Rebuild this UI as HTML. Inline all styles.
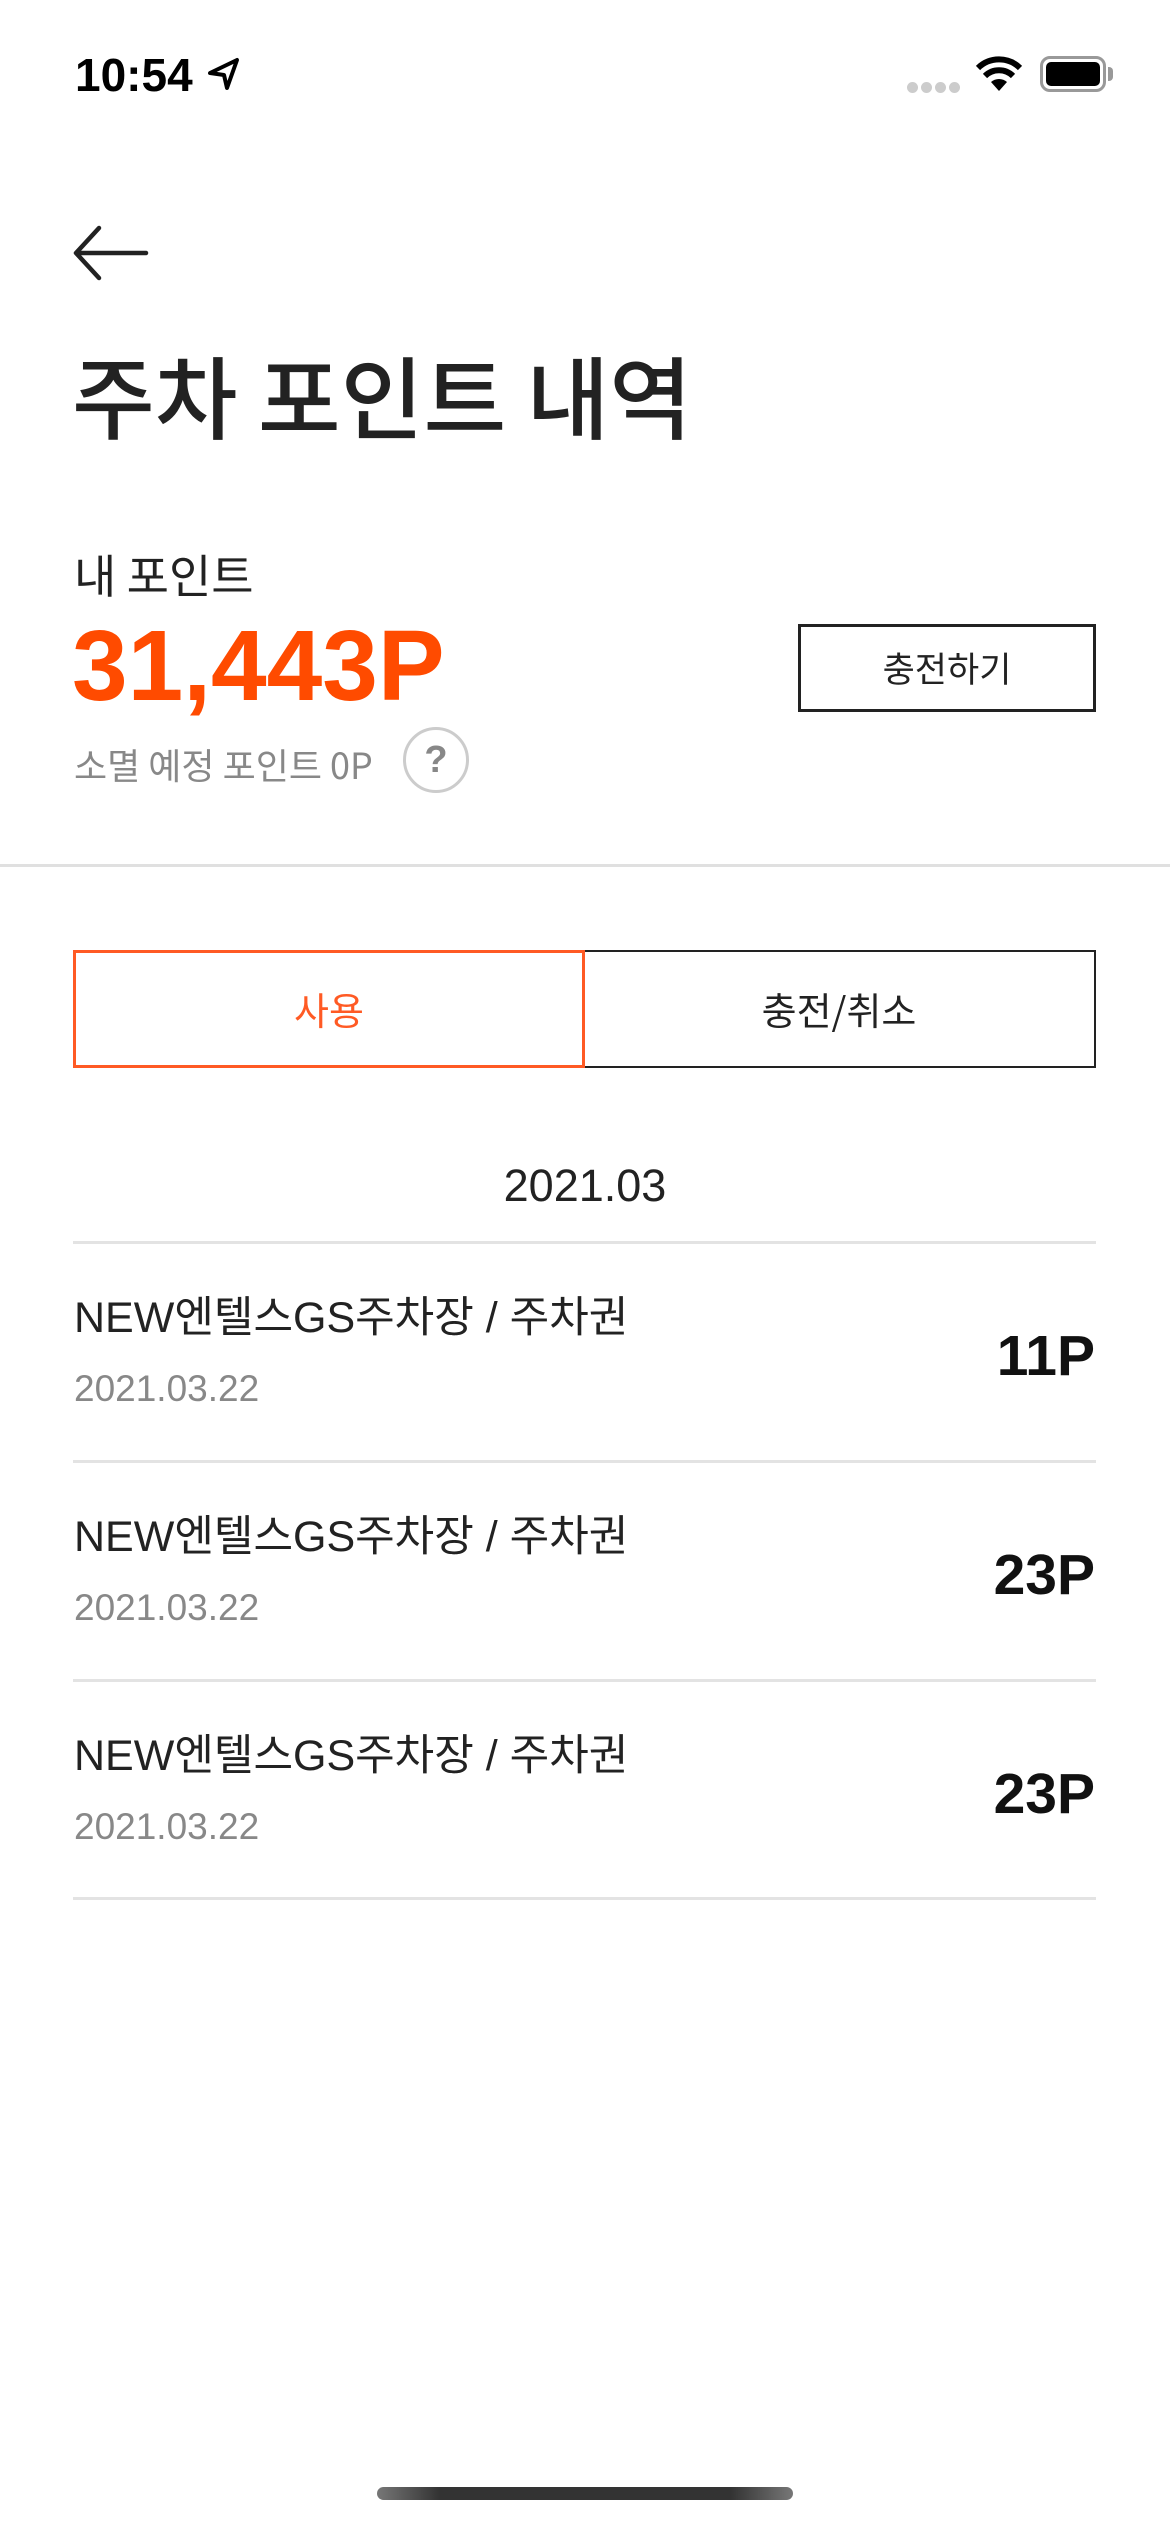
<!DOCTYPE html>
<html><head><meta charset="utf-8"><style>
*{margin:0;padding:0;box-sizing:border-box}
body{width:1170px;height:2532px;background:#fff;position:relative;overflow:hidden;font-family:"Liberation Sans","Noto Sans CJK KR",sans-serif;color:#222}
.a{position:absolute;white-space:nowrap}
.line{position:absolute;left:73px;width:1023px;height:3px;background:#e3e3e3}
.t{font-size:43px;color:#222;left:74px;line-height:1}
.d{font-size:37px;color:#888;left:74px;line-height:1}
.p{font-size:57px;font-weight:bold;color:#111;right:75px;line-height:1}
</style></head><body>
<div class="a" style="left:75px;top:52px;font-size:46px;font-weight:bold;line-height:46px;color:#000">10:54</div>
<svg class="a" style="left:206px;top:56px" width="36" height="36" viewBox="0 0 36 36"><path d="M4 17 L31 4 L21 32 L18 19 Z" fill="none" stroke="#000" stroke-width="4" stroke-linejoin="round"/></svg>
<div class="a" style="left:907px;top:82px;width:11px;height:11px;border-radius:50%;background:#ccc"></div>
<div class="a" style="left:921px;top:82px;width:11px;height:11px;border-radius:50%;background:#ccc"></div>
<div class="a" style="left:935px;top:82px;width:11px;height:11px;border-radius:50%;background:#ccc"></div>
<div class="a" style="left:949px;top:82px;width:11px;height:11px;border-radius:50%;background:#ccc"></div>
<svg class="a" style="left:974px;top:54px" width="50" height="38" viewBox="0 0 50 38"><path d="M25 37 L17 28 A12 12 0 0 1 33 28 Z" fill="#000"/><path d="M11 22 A20 20 0 0 1 39 22" fill="none" stroke="#000" stroke-width="6"/><path d="M4 14 A30 30 0 0 1 46 14" fill="none" stroke="#000" stroke-width="6"/></svg>
<div class="a" style="left:1040px;top:56px;width:66px;height:36px;border:3px solid #999;border-radius:10px;padding:3px"><div style="width:100%;height:100%;background:#000;border-radius:5px"></div></div>
<div class="a" style="left:1108px;top:67px;width:5px;height:14px;background:#999;border-radius:0 4px 4px 0"></div>
<svg class="a" style="left:72px;top:224px" width="80" height="58" viewBox="0 0 80 58"><path d="M74 29 H5 M27 4 L4 29 L27 54" fill="none" stroke="#222" stroke-width="4.5" stroke-linecap="round" stroke-linejoin="round"/></svg>
<div class="a" style="left:72px;top:338px;font-size:90px;line-height:110px;letter-spacing:0px;font-weight:500;color:#222;font-family:'Noto Sans CJK KR',sans-serif">주차 포인트 내역</div>
<div class="a" style="left:74px;top:544px;font-size:46px;line-height:60px;color:#222;font-family:'Noto Sans CJK KR',sans-serif">내 포인트</div>
<div class="a" style="left:72px;top:630px;font-size:100px;line-height:72px;font-weight:bold;color:#ff4b00">31,443P</div>
<div class="a" style="left:74px;top:740px;font-size:36px;line-height:48px;color:#888;font-family:'Noto Sans CJK KR',sans-serif">소멸 예정 포인트 0P</div>
<div class="a" style="left:403px;top:727px;width:66px;height:66px;border:3px solid #ccc;border-radius:50%;text-align:center;font-size:38px;line-height:60px;font-weight:bold;color:#888">?</div>
<div class="a" style="left:798px;top:624px;width:298px;height:88px;border:3px solid #222;text-align:center;font-size:35px;line-height:82px;color:#222;font-family:'Noto Sans CJK KR',sans-serif">충전하기</div>
<div class="a" style="left:0;top:864px;width:1170px;height:3px;background:#e0e0e0"></div>
<div class="a" style="left:582px;top:950px;width:514px;height:118px;border:2px solid #222;text-align:center;font-size:38px;line-height:114px;color:#222;font-family:'Noto Sans CJK KR',sans-serif">충전/취소</div>
<div class="a" style="left:73px;top:950px;width:512px;height:118px;border:3px solid #ff5a24;text-align:center;font-size:38px;line-height:112px;color:#ff5a24;font-family:'Noto Sans CJK KR',sans-serif;background:#fff">사용</div>
<div class="a" style="left:0;width:1170px;top:1163px;text-align:center;font-size:45px;line-height:46px;color:#222">2021.03</div>
<div class="line" style="top:1241px"></div>
<div class="a t" style="top:1297px">NEW엔텔스GS주차장 / 주차권</div>
<div class="a d" style="top:1370px">2021.03.22</div>
<div class="a p" style="top:1328px">11P</div>
<div class="line" style="top:1460px"></div>
<div class="a t" style="top:1516px">NEW엔텔스GS주차장 / 주차권</div>
<div class="a d" style="top:1589px">2021.03.22</div>
<div class="a p" style="top:1547px">23P</div>
<div class="line" style="top:1679px"></div>
<div class="a t" style="top:1735px">NEW엔텔스GS주차장 / 주차권</div>
<div class="a d" style="top:1808px">2021.03.22</div>
<div class="a p" style="top:1766px">23P</div>
<div class="line" style="top:1897px"></div>
<div class="a" style="left:377px;top:2487px;width:416px;height:13px;border-radius:7px;background:linear-gradient(90deg,#777,#333 15%,#333 85%,#777)"></div>
</body></html>
